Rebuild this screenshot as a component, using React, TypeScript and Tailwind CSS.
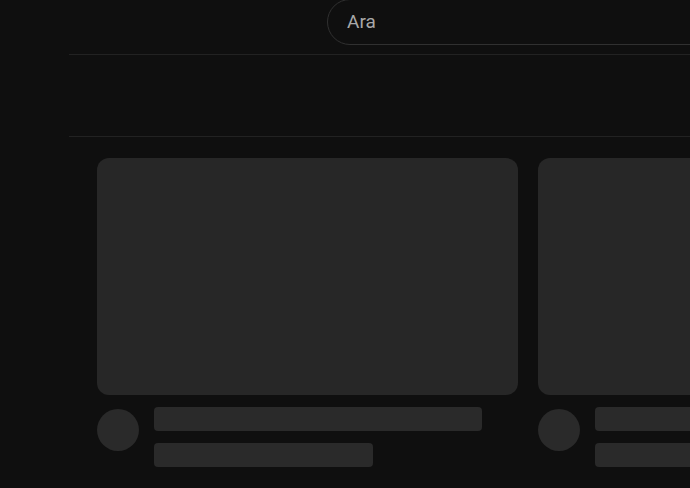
import React from 'react';

const VideoSkeleton: React.FC = () => (
  <div className="flex w-[421px] shrink-0 flex-col">
    <div className="h-[237px] w-full rounded-xl bg-[#272727]" />
    <div className="mt-3 flex gap-[15px]">
      <div className="mt-[2px] h-[42px] w-[42px] shrink-0 rounded-full bg-[#2a2a2a]" />
      <div className="flex flex-col gap-3">
        <div className="h-6 w-[328px] rounded bg-[#2a2a2a]" />
        <div className="h-6 w-[219px] rounded bg-[#2a2a2a]" />
      </div>
    </div>
  </div>
);

const App: React.FC = () => {
  return (
    <div className="flex h-[488px] w-[690px] overflow-hidden bg-[#0f0f0f] font-['Roboto',sans-serif]">
      {/* Sidebar */}
      <aside className="w-[69px] shrink-0" />

      <main className="flex min-w-0 flex-1 flex-col">
        {/* Header */}
        <header className="h-[55px] shrink-0 border-b border-[#222]">
          <div className="-mt-[1px] ml-[258px] flex h-[46px] w-[600px] items-center rounded-full border border-[#303030] pl-[19px]">
            <span className="text-[19px] text-[#a8a8a8]">Ara</span>
          </div>
        </header>

        {/* Chips row */}
        <div className="h-[82px] shrink-0 border-b border-[#222]" />

        {/* Video grid */}
        <div className="flex gap-5 pl-7 pt-[21px]">
          <VideoSkeleton />
          <VideoSkeleton />
        </div>
      </main>
    </div>
  );
};

export default App;
